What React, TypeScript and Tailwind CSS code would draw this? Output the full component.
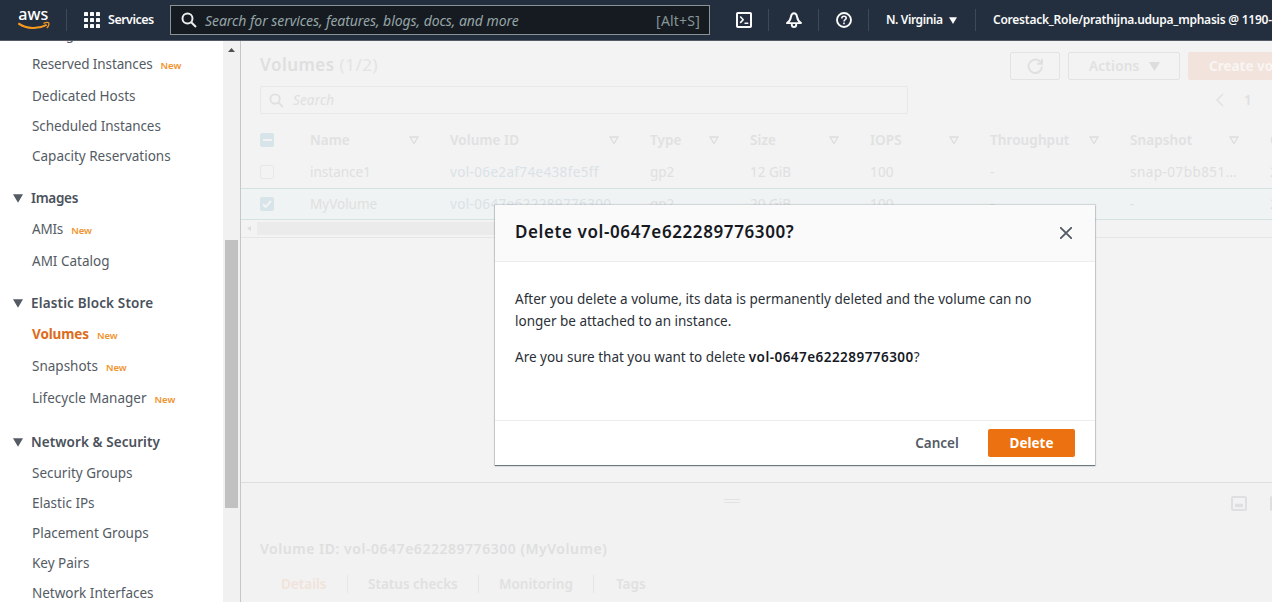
import React from "react";

type NavEntry = { label: string; gap: string; track: string; fresh?: boolean; header?: boolean; active?: boolean };

const nav: NavEntry[] = [
  { label: "Savings Plans", gap: "-mt-[22px]", track: "tracking-normal" },
  { label: "Reserved Instances", gap: "mt-0", track: "tracking-[-0.12px]", fresh: true },
  { label: "Dedicated Hosts", gap: "mt-[2px]", track: "tracking-normal" },
  { label: "Scheduled Instances", gap: "mt-0", track: "tracking-[-0.07px]" },
  { label: "Capacity Reservations", gap: "mt-0", track: "tracking-normal" },
  { label: "Images", gap: "mt-3", track: "tracking-[-0.3px]", header: true },
  { label: "AMIs", gap: "mt-px", track: "tracking-[-0.2px]", fresh: true },
  { label: "AMI Catalog", gap: "mt-[2px]", track: "tracking-normal" },
  { label: "Elastic Block Store", gap: "mt-3", track: "tracking-[0.15px]", header: true },
  { label: "Volumes", gap: "mt-px", track: "tracking-[-0.12px]", fresh: true, active: true },
  { label: "Snapshots", gap: "mt-[2px]", track: "tracking-normal", fresh: true },
  { label: "Lifecycle Manager", gap: "mt-[2px]", track: "tracking-normal", fresh: true },
  { label: "Network & Security", gap: "mt-[14px]", track: "tracking-[0.07px]", header: true },
  { label: "Security Groups", gap: "mt-px", track: "tracking-normal" },
  { label: "Elastic IPs", gap: "mt-0", track: "tracking-normal" },
  { label: "Placement Groups", gap: "mt-0", track: "tracking-normal" },
  { label: "Key Pairs", gap: "mt-0", track: "tracking-normal" },
  { label: "Network Interfaces", gap: "mt-0", track: "tracking-normal" },
];

const columns = [
  { title: "Name", width: "w-[140px]", track: "tracking-normal", cells: ["instance1", "MyVolume"] },
  { title: "Volume ID", width: "w-[200px]", track: "tracking-[0.35px]", cells: ["vol-06e2af74e438fe5ff", "vol-0647e622289776300"], link: true },
  { title: "Type", width: "w-[100px]", track: "tracking-normal", cells: ["gp2", "gp2"] },
  { title: "Size", width: "w-[120px]", track: "tracking-normal", cells: ["12 GiB", "20 GiB"] },
  { title: "IOPS", width: "w-[120px]", track: "tracking-[0.2px]", cells: ["100", "100"] },
  { title: "Throughput", width: "w-[140px]", track: "tracking-normal", cells: ["-", "-"] },
  { title: "Snapshot", width: "w-[140px]", track: "tracking-[0.45px]", cells: ["snap-07bb851…", "-"] },
];

function Magnifier({ className }: { className: string }) {
  return (
    <svg className={className} viewBox="0 0 16 16" fill="none" stroke="currentColor" strokeWidth="2">
      <circle cx="6.5" cy="6.5" r="5" />
      <path d="M10.2 10.2 15 15" />
    </svg>
  );
}

function Divider() {
  return <div className="h-[22px] w-px shrink-0 bg-[#3d4858]" />;
}

function TopBar() {
  return (
    <header className="flex h-[41px] w-full shrink-0 items-center overflow-hidden border-b border-[#545b64] bg-[#232f3e] text-[#fafafa]">
      <svg className="ml-[18px] h-[22px] w-8 shrink-0" viewBox="0 0 32 22">
        <text x="0.3" y="11.2" fill="#ffffff" fontFamily="Noto Sans, sans-serif" fontSize="17" fontWeight="500" textLength="30" lengthAdjust="spacingAndGlyphs">aws</text>
        <path d="M.3 14.400c8.600 6 19.800 6 28.400 1.500" fill="none" stroke="#f7981f" strokeWidth="2" />
        <path d="M25.500 14.300c2.300-.8 4.800-.9 5.300-.2.500.8-.3 3.300-2 5" fill="none" stroke="#f7981f" strokeWidth="1.300" />
      </svg>
      <div className="ml-4 h-[22px] w-px shrink-0 bg-[#3d4858]" />
      <svg className="ml-[17px] h-4 w-4 shrink-0" viewBox="0 0 16 16" fill="currentColor">
        {[0, 6, 12].map((y) => [0, 6, 12].map((x) => <rect key={`${x}-${y}`} x={x} y={y} width="4" height="4" rx=".6" />))}
      </svg>
      <span className="ml-2 w-[62px] shrink-0 text-[12.5px] font-semibold tracking-[-0.5px] whitespace-nowrap">Services</span>
      <div className="flex h-[30px] w-[540px] shrink-0 items-center border border-[#879596] bg-[#161b22] px-[9px]">
        <Magnifier className="ml-px h-4 w-4 text-[#eaeded]" />
        <span className="ml-2 flex-1 text-[14px] tracking-[-0.06px] whitespace-nowrap text-[#95a5a6] italic">Search for services, features, blogs, docs, and more</span>
        <span className="text-[14px] tracking-[0.2px] text-[#879596]">[Alt+S]</span>
      </div>
      <svg className="ml-[26px] h-4 w-4 shrink-0" viewBox="0 0 16 16" fill="none" stroke="currentColor" strokeWidth="2" strokeLinejoin="round">
        <rect x="1" y="1" width="14" height="14" rx=".8" />
        <path d="m4.200 4.500 3 3.200-3 3.200M8.500 11.300h3.800" strokeWidth="1.600" />
      </svg>
      <div className="w-4 shrink-0" />
      <Divider />
      <svg className="ml-[17px] h-4 w-4 shrink-0" viewBox="0 0 16 16" fill="none" stroke="currentColor" strokeWidth="1.900" strokeLinejoin="round">
        <path d="M8 1.200C6 1.200 5.200 3 4.900 5 4.500 8 3 9.600 1 11.100h14C13 9.600 11.500 8 11.100 5 10.800 3 10 1.200 8 1.200Z" />
        <path d="M5.800 11.500v1.200c0 1.500.9 2.300 2.200 2.300s2.200-.8 2.200-2.300v-1.200" />
      </svg>
      <div className="w-4 shrink-0" />
      <Divider />
      <svg className="ml-[17px] h-4 w-4 shrink-0" viewBox="0 0 16 16" fill="none" stroke="currentColor" strokeWidth="1.900">
        <circle cx="8" cy="8" r="7" />
        <path d="M5.800 6.500C5.800 5 6.700 4.300 8 4.300s2.200.8 2.200 1.900c0 1.500-2.200 1.500-2.200 3.200M8 10.500v1.700" strokeWidth="1.600" />
      </svg>
      <div className="w-4 shrink-0" />
      <Divider />
      <span className="ml-[17px] w-[63px] shrink-0 text-[12px] font-semibold tracking-[-0.4px] whitespace-nowrap">N. Virginia</span>
      <svg className="h-[7px] w-2 shrink-0" viewBox="0 0 8 7" fill="currentColor"><path d="M0 .3h8L4 7Z" /></svg>
      <div className="w-[18px] shrink-0" />
      <Divider />
      <span className="ml-[17px] shrink-0 text-[12px] font-semibold tracking-[-0.24px] whitespace-nowrap">Corestack_Role/prathijna.udupa_mphasis @ 1190-</span>
    </header>
  );
}

function SideNav() {
  return (
    <aside className="flex w-[241px] shrink-0 overflow-hidden border-r border-[#c6c6c6] bg-white">
      <nav className="flex w-[223px] flex-col">
        {nav.map((n) => (
          <div key={n.label} className={`flex h-[30px] shrink-0 items-center ${n.gap} ${n.header ? "pl-[13px]" : "pl-8"}`}>
            {n.header && (
              <svg className="mr-2 h-[9px] w-[10px]" viewBox="0 0 10 9" fill="#545b64"><path d="M0 .3h10L5 8.700Z" /></svg>
            )}
            <span className={`text-[13.500px] whitespace-nowrap ${n.track} ${n.header ? "font-semibold text-[#4a525b]" : n.active ? "font-bold text-[#dd6b20]" : "text-[#545b64]"}`}>{n.label}</span>
            {n.fresh && <span className="mt-1 ml-2 text-[9.500px] font-semibold text-[#f0932e]">New</span>}
          </div>
        ))}
      </nav>
      <div className="flex w-[17px] flex-col items-center bg-[#f1f1f1]">
        <svg className="mt-[7px] h-1 w-[7px]" viewBox="0 0 7 4" fill="#505050"><path d="M0 4h7L3.500 0Z" /></svg>
        <div className="mt-[188px] h-[268px] w-[13px] bg-[#c1c1c1]" />
      </div>
    </aside>
  );
}

function VolumesTable() {
  return (
    <div className="flex flex-col text-[13.500px]">
      <div className="flex h-8 items-center pl-[19px]">
        <span className="flex h-[14px] w-[14px] shrink-0 items-center justify-center rounded-[2px] bg-[#d7e4ea]"><span className="h-[2px] w-[9px] bg-[#f3f3f3]" /></span>
        <div className="ml-9 flex shrink-0 font-semibold text-[#e0e1e1]">
          {columns.map((c) => (
            <div key={c.title} className={`flex shrink-0 items-center justify-between pr-[31px] tracking-[0.1px] whitespace-nowrap ${c.width}`}>
              {c.title}
              <svg className="h-[9px] w-[10px]" viewBox="0 0 10 9" fill="none" stroke="#dcdddd" strokeWidth="1.300"><path d="M1 1h8L5 7.500Z" /></svg>
            </div>
          ))}
          <span className="w-10 shrink-0">C</span>
        </div>
      </div>
      {[0, 1].map((r) => (
        <div key={r} className={`flex h-8 items-center pl-[19px] ${r ? "border-y border-[#d5e2e2] bg-[#f0f3f3]" : ""}`}>
          {r ? (
            <svg className="h-[14px] w-[14px] shrink-0" viewBox="0 0 14 14"><rect width="14" height="14" rx="2" fill="#d7e4ea" /><path d="m3 7.300 2.700 2.700L11 4" fill="none" stroke="#f3f3f3" strokeWidth="2" /></svg>
          ) : (
            <span className="h-[14px] w-[14px] shrink-0 rounded-[2px] border border-[#e7e8e8]" />
          )}
          <div className="ml-9 flex shrink-0 text-[#dfe0e0]">
            {columns.map((c) => (
              <span key={c.title} className={`shrink-0 whitespace-nowrap ${c.width} ${c.track} ${c.link ? "text-[#d9e2e7]" : ""}`}>{c.cells[r]}</span>
            ))}
            <span className="w-10 shrink-0">2</span>
          </div>
        </div>
      ))}
      <div className="flex h-[18px] items-center border-b border-[#e6e6e6]">
        <svg className="ml-[6px] h-[5px] w-1" viewBox="0 0 4 5" fill="#dddddd"><path d="M4 0v5L0 2.500Z" /></svg>
        <div className="ml-[6px] h-[13px] w-[760px] bg-[#ebebeb]" />
      </div>
    </div>
  );
}

function DetailPanel() {
  return (
    <section className="flex h-[120px] flex-col border-t border-[#dedede] bg-[#f2f2f2]">
      <div className="flex h-[40px] items-center">
        <div className="-mt-[5px] ml-[483px] h-1 w-4 shrink-0 border-y border-[#e2e2e2]" />
        <svg className="ml-[491px] h-[15px] w-4 shrink-0" viewBox="0 0 16 15" fill="none" stroke="#dddfe1" strokeWidth="2"><rect x="1" y="1" width="14" height="13" rx="1" /><path d="M4 9.500h8" strokeWidth="3.500" /></svg>
        <svg className="ml-[23px] h-[15px] w-4 shrink-0" viewBox="0 0 16 15" fill="none" stroke="#dddfe1" strokeWidth="2"><rect x="1" y="1" width="14" height="13" rx="1" /></svg>
      </div>
      <h2 className="mt-4 ml-[19px] h-5 text-[14px] leading-5 font-semibold tracking-[0.53px] whitespace-nowrap text-[#dedfdf]">Volume ID: vol-0647e622289776300 (MyVolume)</h2>
      <div className="mt-[15px] ml-10 flex h-5 items-center text-[13.500px] font-semibold whitespace-nowrap text-[#e0e1e1]">
        <span className="w-[66px] text-[#f1e3da]">Details</span>
        <span className="h-[18px] w-px bg-[#e5e6e6]" />
        <span className="ml-5 w-[110px]">Status checks</span>
        <span className="h-[18px] w-px bg-[#e5e6e6]" />
        <span className="ml-5 w-[94px]">Monitoring</span>
        <span className="h-[18px] w-px bg-[#e5e6e6]" />
        <span className="ml-[22px]">Tags</span>
      </div>
    </section>
  );
}

function DeleteDialog() {
  return (
    <div role="dialog" className="absolute top-[205px] left-[495px] flex h-[260px] w-[600px] flex-col bg-white shadow-[0_1px_1px_0_rgba(0,28,36,0.5),0_0_1px_1px_rgba(0,28,36,0.12)]">
      <div className="flex h-[57px] items-center justify-between border-b border-[#eaeded] bg-[#fafafa] pr-[23px] pl-5">
        <h1 className="-mt-[2px] text-[17px] font-semibold tracking-[0.6px] whitespace-nowrap text-[#16191f]">Delete vol-0647e622289776300?</h1>
        <svg className="h-3 w-3" viewBox="0 0 12 12" fill="none" stroke="#545b64" strokeWidth="1.900" strokeLinecap="round"><path d="m.8.8 10.400 10.400M11.200.8.8 11.200" /></svg>
      </div>
      <div className="flex h-[158px] flex-col pt-[26px] pl-5 text-[13.500px] leading-[22px] whitespace-nowrap text-[#2b3038]">
        <p className="tracking-[0.02px]">After you delete a volume, its data is permanently deleted and the volume can no</p>
        <p>longer be attached to an instance.</p>
        <p className="mt-[14px]">Are you sure that you want to delete <b className="font-semibold tracking-[0.46px] text-[#16191f]">vol-0647e622289776300</b>?</p>
      </div>
      <div className="flex h-[45px] items-center justify-end border-t border-[#eaeded] pr-5 text-[13.500px] font-bold">
        <button className="w-[44px] font-semibold whitespace-nowrap text-[#545b64]">Cancel</button>
        <button className="ml-[29px] h-7 w-[87px] rounded-[2px] bg-[#ec7211] text-white">Delete</button>
      </div>
    </div>
  );
}

export default function App() {
  return (
    <div className="relative flex h-[602px] w-[1272px] flex-col overflow-hidden bg-[#f3f3f3] font-['Noto_Sans',sans-serif]">
      <TopBar />
      <div className="flex h-[561px]">
        <SideNav />
        <main className="flex w-[1031px] flex-col overflow-hidden">
          <div className="flex h-[45px] items-center pt-[5px] pl-[19px]">
            <h1 className="-mt-[2px] w-[750px] shrink-0 text-[17px] font-semibold tracking-[0.5px] text-[#dedfdf]">Volumes <span className="font-normal text-[#e3e4e4]">(1/2)</span></h1>
            <div className="flex h-7 w-[50px] shrink-0 items-center justify-center rounded-[2px] border border-[#e2e3e3]">
              <svg className="h-4 w-4" viewBox="0 0 16 16" fill="none" stroke="#dfe0e0" strokeWidth="2"><path d="M15 8.500A6.700 6.700 0 1 1 12.800 3.300L14.500 5M15 .8V5.800h-5" /></svg>
            </div>
            <div className="ml-2 flex h-7 w-28 shrink-0 items-center rounded-[2px] border border-[#e2e3e3] pl-5 text-[13.500px] font-semibold text-[#e0e1e1]">
              <span className="w-[60px] tracking-[0.25px]">Actions</span>
              <svg className="h-[9px] w-[11px]" viewBox="0 0 11 9" fill="#dcdddd"><path d="M0 0h11L5.500 9Z" /></svg>
            </div>
            <div className="ml-2 flex h-7 w-[130px] shrink-0 items-center rounded-[2px] bg-[#f2e4dc] pl-[21px] text-[13.500px] font-bold whitespace-nowrap text-[#f8f5f3]">Create volume</div>
          </div>
          <div className="flex h-7 items-center pl-[19px]">
            <div className="flex h-7 w-[648px] items-center rounded-[2px] border border-[#e7e8e8] pl-2 text-[#dfe0e0]">
              <Magnifier className="h-[15px] w-[15px]" />
              <span className="ml-[9px] text-[13.500px] tracking-[0.15px] italic">Search</span>
            </div>
            <svg className="ml-[307px] h-[14px] w-[9px]" viewBox="0 0 9 14" fill="none" stroke="#e2e3e3" strokeWidth="1.700"><path d="M8 1 2 7l6 6" /></svg>
            <span className="ml-5 text-[13.500px] font-semibold text-[#dfe0e0]">1</span>
          </div>
          <div className="h-[10px]" />
          <VolumesTable />
          <div className="flex-1" />
          <DetailPanel />
        </main>
      </div>
      <DeleteDialog />
    </div>
  );
}
